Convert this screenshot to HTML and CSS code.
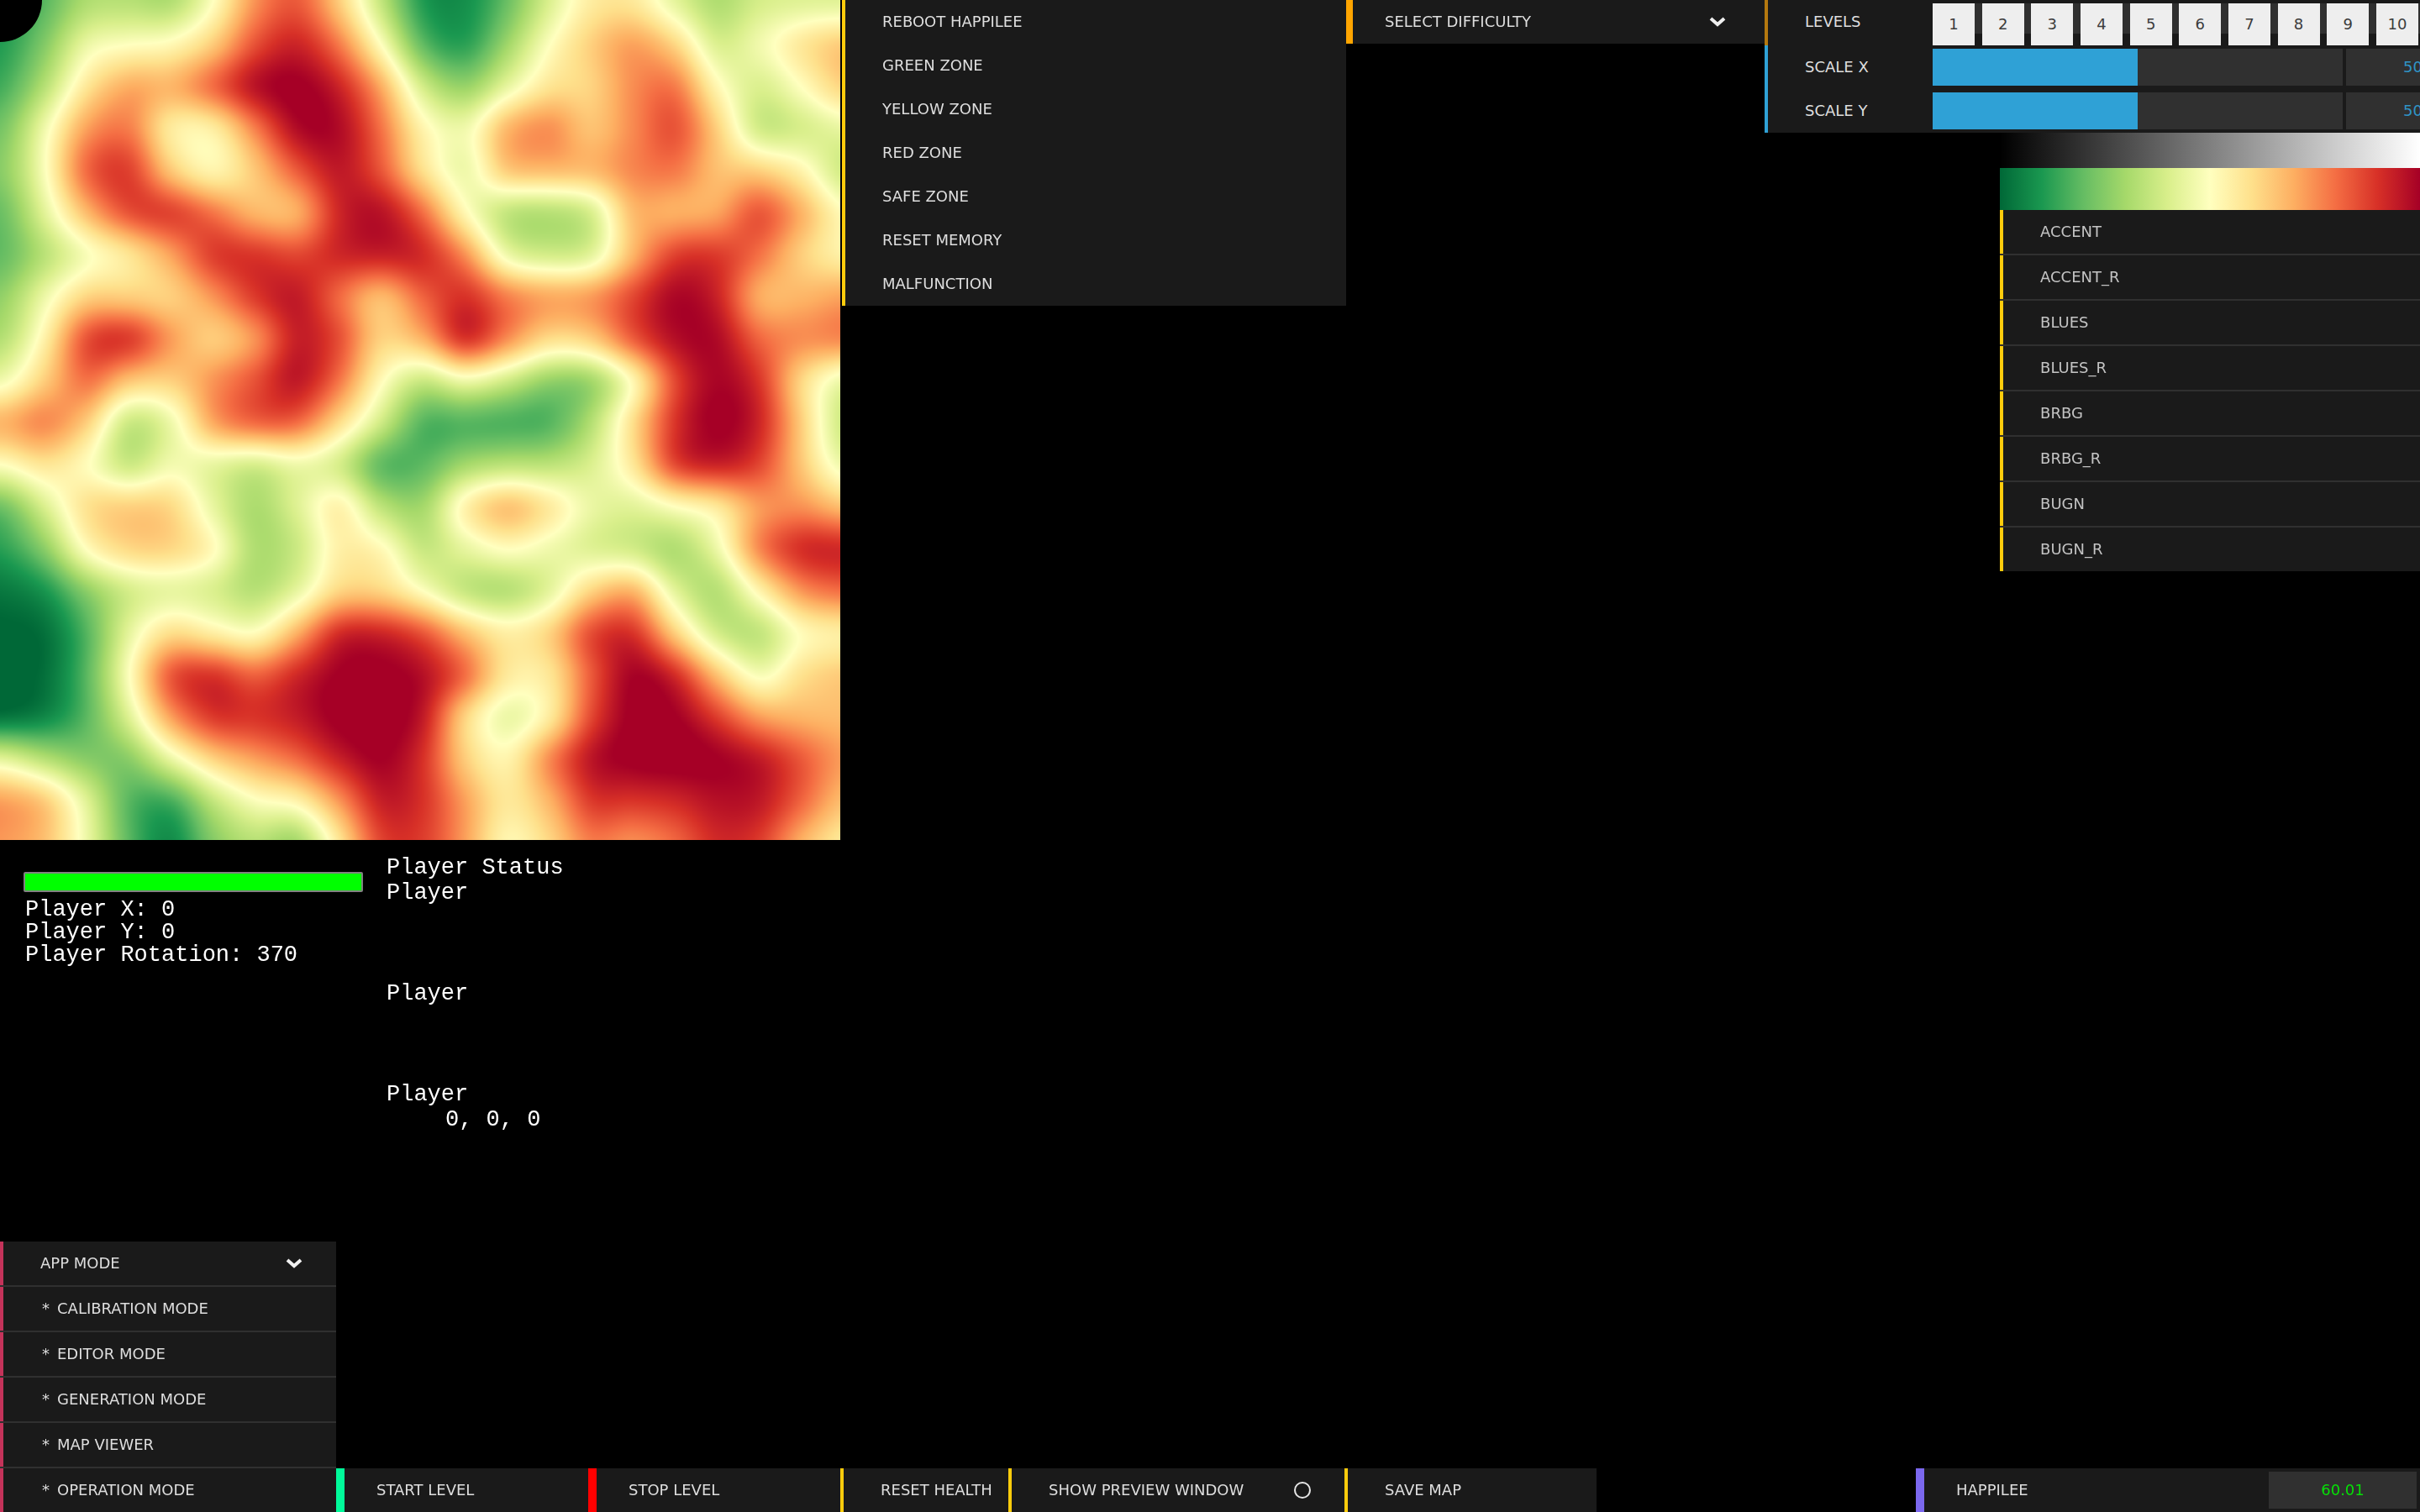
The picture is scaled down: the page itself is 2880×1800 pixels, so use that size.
FILE: index.html
```html
<!DOCTYPE html>
<html lang="en">
<head>
<meta charset="utf-8">
<meta name="viewport" content="width=device-width, initial-scale=1">
<title>Happilee</title>
<link rel="stylesheet" href="styles.css">
</head>
<body>
<main class="workspace">
  <section class="map-column">
    <canvas class="map" id="map" width="1000" height="1000" aria-label="Height map"></canvas>
    <div class="status">
      <div class="player">
        <div class="health" role="img" aria-label="Health"></div>
        <p class="readout">Player X: 0</p>
        <p class="readout">Player Y: 0</p>
        <p class="readout">Player Rotation: 370</p>
      </div>
      <div class="player-status">
        <h2 class="status-line">Player Status</h2>
        <p class="status-entry">Player</p>
        <p class="status-entry">Player</p>
        <p class="status-line">Player</p>
        <p class="status-line status-vector">0, 0, 0</p>
      </div>
    </div>
  </section>

  <nav class="panel zones accent-yellow">
    <button class="item" type="button">REBOOT HAPPILEE</button>
    <button class="item" type="button">GREEN ZONE</button>
    <button class="item" type="button">YELLOW ZONE</button>
    <button class="item" type="button">RED ZONE</button>
    <button class="item" type="button">SAFE ZONE</button>
    <button class="item" type="button">RESET MEMORY</button>
    <button class="item" type="button">MALFUNCTION</button>
  </nav>

  <div class="panel difficulty accent-orange">
    <select class="item difficulty-select" aria-label="Difficulty">
      <option>SELECT DIFFICULTY</option>
    </select>
    <svg class="chevron" viewBox="0 0 20 12" aria-hidden="true"><path d="M2 2l8 7 8-7"/></svg>
  </div>

  <section class="settings">
    <div class="panel controls">
      <div class="control levels accent-amber">
        <span class="control-label">LEVELS</span>
        <div class="level-buttons">
          <button class="level" type="button">1</button>
          <button class="level" type="button">2</button>
          <button class="level" type="button">3</button>
          <button class="level" type="button">4</button>
          <button class="level" type="button">5</button>
          <button class="level" type="button">6</button>
          <button class="level" type="button">7</button>
          <button class="level" type="button">8</button>
          <button class="level" type="button">9</button>
          <button class="level" type="button">10</button>
        </div>
      </div>
      <div class="control accent-blue">
        <label class="control-label" for="scale-x">SCALE X</label>
        <input class="slider" id="scale-x" type="range" min="0" max="100" value="50">
        <output class="slider-value" for="scale-x">50</output>
      </div>
      <div class="control accent-blue">
        <label class="control-label" for="scale-y">SCALE Y</label>
        <input class="slider" id="scale-y" type="range" min="0" max="100" value="50">
        <output class="slider-value" for="scale-y">50</output>
      </div>
    </div>
    <div class="palette">
      <div class="ramp ramp-gray"></div>
      <div class="ramp ramp-color"></div>
      <div class="panel palette-list">
        <button class="item accent-yellow" type="button">ACCENT</button>
        <button class="item accent-yellow" type="button">ACCENT_R</button>
        <button class="item accent-yellow" type="button">BLUES</button>
        <button class="item accent-yellow" type="button">BLUES_R</button>
        <button class="item accent-yellow" type="button">BRBG</button>
        <button class="item accent-yellow" type="button">BRBG_R</button>
        <button class="item accent-yellow" type="button">BUGN</button>
        <button class="item accent-yellow" type="button">BUGN_R</button>
      </div>
    </div>
  </section>
</main>

<footer class="dock">
  <nav class="panel modes">
    <button class="item accent-crimson" type="button" aria-expanded="true">APP MODE
      <svg class="chevron" viewBox="0 0 20 12" aria-hidden="true"><path d="M2 2l8 7 8-7"/></svg>
    </button>
    <button class="item mode accent-crimson" type="button"><span class="bullet">*</span>CALIBRATION MODE</button>
    <button class="item mode accent-crimson" type="button"><span class="bullet">*</span>EDITOR MODE</button>
    <button class="item mode accent-crimson" type="button"><span class="bullet">*</span>GENERATION MODE</button>
    <button class="item mode accent-crimson" type="button"><span class="bullet">*</span>MAP VIEWER</button>
    <button class="item mode accent-crimson" type="button"><span class="bullet">*</span>OPERATION MODE</button>
  </nav>
  <button class="panel item wide accent-mint" type="button">START LEVEL</button>
  <button class="panel item wide accent-red" type="button">STOP LEVEL</button>
  <button class="panel item narrow accent-yellow" type="button">RESET HEALTH</button>
  <label class="panel item preview accent-yellow">SHOW PREVIEW WINDOW
    <input class="preview-toggle" type="checkbox">
  </label>
  <button class="panel item wide accent-yellow" type="button">SAVE MAP</button>
  <div class="panel item framerate accent-violet">HAPPILEE <output class="framerate-value">60.01</output></div>
</footer>
<script src="map.js"></script>
</body>
</html>
```
FILE: styles.css
```css
* { box-sizing: border-box; }

body {
  display: flex;
  flex-direction: column;
  min-height: 100vh;
  margin: 0;
  background: #000;
  color: #dedede;
  font: 18px/20px "DejaVu Sans", Verdana, sans-serif;
  overflow-x: hidden;
}

button, select, input { margin: 0; font: inherit; color: inherit; }

/* Shared rows */
.panel { background: #1a1a1a; }

.item {
  display: flex;
  align-items: center;
  justify-content: space-between;
  width: 100%;
  height: 52px;
  padding: 0 40px 0 44px;
  border: 0 solid;
  background: #1a1a1a;
  text-align: left;
  white-space: nowrap;
}

.chevron {
  flex: none;
  width: 20px;
  height: 12px;
  fill: none;
  stroke: #f0f0f0;
  stroke-width: 4;
}

.accent-yellow { border-left: 4px solid #ffcc0c; }
.accent-orange { border-left: 8px solid #ffa500; }
.accent-amber { border-left: 4px solid #b4780f; }
.accent-blue { border-left: 4px solid #2fa1d6; }
.accent-crimson { border-left: 4px solid #c4335a; }
.accent-mint { border-left: 10px solid #00fa9a; }
.accent-red { border-left: 10px solid #f00; }
.accent-violet { border-left: 10px solid #7b68ee; }

/* Upper area */
.workspace {
  flex: 1;
  display: grid;
  grid-template-columns: minmax(0, 1000fr) minmax(0, 602fr) minmax(0, 498fr) minmax(0, 780fr);
  align-items: start;
}

.map { display: block; width: 100%; aspect-ratio: 1; }

.status {
  display: flex;
  gap: 28px;
  padding: 18px 28px;
  color: #fff;
  font: 27px/30px "Liberation Mono", monospace;
}

.status p, .status h2 { margin: 0; font-size: inherit; font-weight: inherit; }

.player { flex: 0 0 404px; padding-top: 20px; }

.health {
  height: 24px;
  margin-bottom: 8px;
  border: 2px solid #808080;
  border-radius: 2px;
  background: #0f0;
}

.readout { padding-left: 2px; line-height: 27px; }
.status-entry { height: 120px; }
.status-vector { padding-left: 70px; }

.zones { margin-left: 2px; }
.zones .item { border: 0; }

.difficulty {
  display: flex;
  align-items: center;
  padding-right: 46px;
}

.difficulty-select {
  appearance: none;
  flex: 1;
  padding: 0 0 0 38px;
}

/* Settings */
.controls { overflow: hidden; }

.control { display: flex; height: 52px; padding: 4px 0; }
.control-label { flex: 0 0 196px; padding-left: 44px; line-height: 44px; }

.levels { height: 54px; padding-bottom: 0; }

.level-buttons {
  flex: 1;
  display: flex;
  justify-content: space-between;
  padding-right: 2px;
  background: linear-gradient(#303030 36px, #1a1a1a 36px);
}

.level {
  width: 50px;
  height: 50px;
  padding: 0;
  border: 0;
  background: #eee;
  color: #3c3c3c;
}

.slider {
  appearance: none;
  flex: 0 0 488px;
  height: 44px;
  background: linear-gradient(to right, #2fa1d6 50%, #303030 50%);
}

.slider::-webkit-slider-thumb { appearance: none; width: 1px; height: 44px; }

.slider-value {
  flex: 0 0 200px;
  margin-left: 4px;
  padding-left: 68px;
  background: #303030;
  color: #2f94c6;
  line-height: 44px;
}

.palette { width: 64.1%; margin-left: auto; }
.ramp-gray { height: 42px; background: linear-gradient(to right, #000, #fff); }

.ramp-color {
  height: 50px;
  background: linear-gradient(to right, #006837, #1a9850, #66bd63, #a6d96a, #d9ef8b, #ffffbf, #fee08b, #fdae61, #f46d43, #d73027, #a50026);
}

.palette-list, .modes {
  display: flex;
  flex-direction: column;
  gap: 2px;
  background: #303030;
}

.palette-list { color: #c4c4c4; }

/* Lower dock */
.dock { display: flex; align-items: flex-end; }
.modes { flex: 0 1 400px; }
.mode { justify-content: flex-start; }
.bullet { width: 20px; padding-left: 2px; }
.dock > .item { flex: 0 1 auto; }
.dock > .wide { width: 300px; padding-left: 38px; }
.dock > .wide.accent-yellow { padding-left: 44px; }
.dock > .narrow { width: 200px; padding-right: 0; }
.dock > .preview { width: 400px; }

.preview-toggle {
  appearance: none;
  width: 20px;
  height: 20px;
  border: 2px solid #e6e6e6;
  border-radius: 50%;
}

.dock > .framerate {
  width: 600px;
  margin-left: auto;
  padding: 0 4px 0 38px;
}

.framerate-value {
  width: 176px;
  background: #303030;
  color: #06e006;
  line-height: 44px;
  text-align: center;
}
```
FILE: map.js
```js
// Terrain heights (0-100) on a regular lattice, 50 map units apart.
const heights = [
  [12,20,33,34,32,49,73,82,63,36,12,10,22,41,56,57,43,32,40,42,42],
  [13,26,46,50,52,63,83,91,77,50,20,13,30,50,63,72,62,40,47,58,65],
  [17,34,58,70,68,80,95,99,91,70,39,28,44,58,61,74,78,52,40,50,63],
  [24,47,72,77,54,53,75,96,96,78,53,46,69,75,64,74,84,63,37,39,44],
  [27,49,81,87,63,51,63,81,93,82,58,44,65,67,67,75,77,65,63,54,37],
  [22,43,67,84,87,78,66,66,90,95,79,51,34,32,38,67,67,69,84,69,51],
  [21,34,47,56,70,87,88,84,90,92,90,74,44,38,41,67,86,87,78,62,53],
  [28,46,62,62,61,72,87,93,78,64,80,89,77,71,73,85,97,91,67,67,71],
  [33,54,85,89,72,61,71,92,84,61,68,91,75,60,63,82,95,96,79,74,76],
  [46,63,79,64,62,73,83,94,78,51,36,46,38,27,28,50,84,97,88,60,43],
  [69,76,63,35,44,71,81,80,60,39,18,18,17,18,33,60,88,99,91,63,36],
  [50,58,50,36,47,43,38,45,39,19,20,31,35,35,41,57,86,92,85,64,44],
  [22,41,60,64,62,44,31,42,56,35,30,56,68,58,45,42,49,55,71,73,65],
  [14,27,52,62,62,53,32,37,55,53,36,44,51,46,41,38,31,45,76,90,91],
  [6,11,27,39,43,40,33,43,61,61,49,35,32,42,62,69,42,32,53,73,79],
  [2,4,19,44,60,54,49,68,90,91,83,66,55,62,85,89,62,38,34,50,54],
  [1,4,20,50,84,89,80,90,98,99,95,80,56,56,81,98,90,65,46,59,64],
  [4,8,20,42,72,88,88,92,99,100,93,60,43,54,84,99,98,86,71,67,66],
  [44,34,26,26,45,62,71,79,91,98,88,62,52,75,94,99,100,98,93,82,71],
  [72,65,43,19,16,36,49,53,72,92,88,71,56,67,87,87,89,94,93,80,65],
  [72,66,46,20,8,26,34,28,56,85,86,71,51,60,76,72,78,89,86,67,55]
];

const stops = [
  [0,104,55], [26,152,80], [102,189,99], [166,217,106], [217,239,139], [255,255,191],
  [254,224,139], [253,174,97], [244,109,67], [215,48,39], [165,0,38]
];

const last = heights.length - 1;
const at = (r, c) => heights[Math.max(0, Math.min(last, r))][Math.max(0, Math.min(last, c))];

// Mitchell-Netravali weights: keeps the slopes round between lattice points.
function weight(distance) {
  const d = Math.abs(distance);
  return d < 1
    ? (7 * d * d * d - 12 * d * d + 16 / 3) / 6
    : (-7 / 3 * d * d * d + 12 * d * d - 20 * d + 32 / 3) / 6;
}

function sample(x, y) {
  const c = Math.floor(x), r = Math.floor(y);
  let sum = 0;
  for (let j = -1; j <= 2; j++) {
    for (let i = -1; i <= 2; i++) {
      sum += at(r + j, c + i) * weight(x - c - i) * weight(y - r - j);
    }
  }
  return 50 + (sum - 50) * 1.07;
}

const canvas = document.getElementById('map');
const context = canvas.getContext('2d');
const size = canvas.width;
const image = context.createImageData(size, size);

for (let y = 0; y < size; y++) {
  for (let x = 0; x < size; x++) {
    const height = sample((x - 3) * last / size, (y - 3) * last / size);
    const value = Math.max(0, Math.min(99.9, height)) / 10;
    const k = Math.floor(value), t = value - k, p = (y * size + x) * 4;
    for (let i = 0; i < 3; i++) {
      image.data[p + i] = stops[k][i] + (stops[k + 1][i] - stops[k][i]) * t;
    }
    image.data[p + 3] = 255;
  }
}
context.putImageData(image, 0, 0);

// The player, at the map origin.
context.arc(0, 0, 50, 0, Math.PI * 2);
context.fill();
```
